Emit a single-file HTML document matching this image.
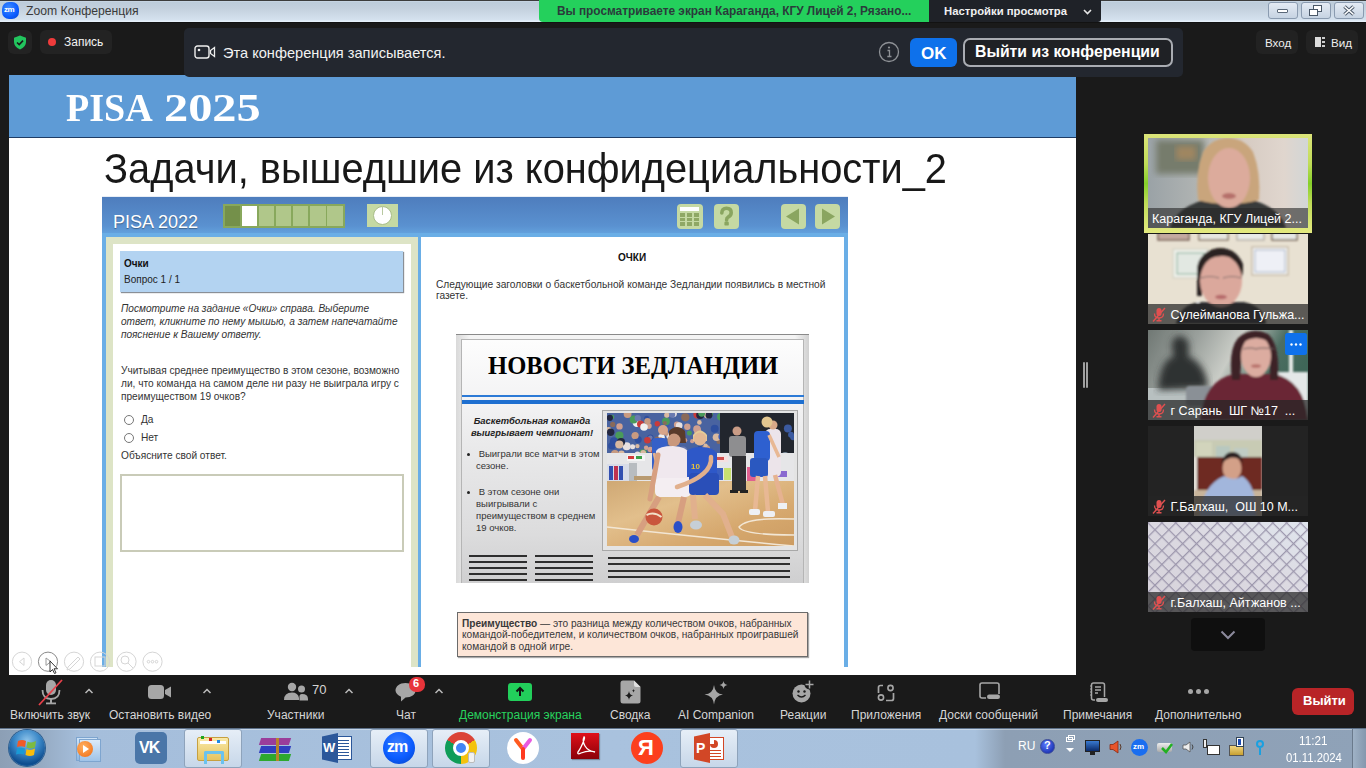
<!DOCTYPE html>
<html><head><meta charset="utf-8">
<style>
*{margin:0;padding:0;box-sizing:border-box}
html,body{width:1366px;height:768px;overflow:hidden;background:#1a1a1a;font-family:"Liberation Sans",sans-serif}
.a{position:absolute}
.t{position:absolute;white-space:nowrap}
.lbl{font-size:12px;color:#d6d6d6}
</style></head><body>
<!-- title bar -->
<div class="a" style="left:0;top:0;width:1366px;height:23px;background:linear-gradient(#3c3c3c 0,#3c3c3c 1px,#cad8e6 1px,#bdccda 2.5px,#c3d0dd 8px,#d5e2ef 20px,#e6f0fa 21px,#e6f0fa 21.5px,#121212 22px)"></div>
<div class="a" style="left:2px;top:2px;width:17px;height:17px;border-radius:7px;background:radial-gradient(circle at 40% 35%,#3f8cff,#0b5cff 60%,#0a45c8)"></div>
<div class="t" style="left:4px;top:5px;font-size:8px;color:#fff;font-weight:bold;letter-spacing:-0.5px">zm</div>
<div class="t" style="left:26px;top:4px;font-size:12.2px;color:#3a3a3a">Zoom Конференция</div>
<!-- green banner -->
<div class="a" style="left:539px;top:0;width:390px;height:22px;background:#24d05c;border-radius:0 0 0 4px"></div>
<div class="t" style="left:557px;top:3.5px;font-size:11.85px;font-weight:bold;color:#2a3b3b">Вы просматриваете экран Караганда, КГУ Лицей 2, Рязано...</div>
<div class="a" style="left:929px;top:0;width:172px;height:22px;background:#1f2228;border-radius:0 0 3px 0"></div>
<div class="t" style="left:944px;top:4.7px;font-size:11.3px;font-weight:bold;color:#f0f0f0">Настройки просмотра</div>
<!-- record indicators -->
<div class="a" style="left:8px;top:30px;width:24px;height:24px;border-radius:6px;background:#232323"></div>
<div class="a" style="left:40px;top:30px;width:72px;height:24px;border-radius:6px;background:#232323"></div>
<div class="a" style="left:48px;top:38px;width:8px;height:8px;border-radius:50%;background:#ef3b3b"></div>
<div class="t" style="left:64px;top:35px;font-size:12px;color:#f2f2f2">Запись</div>
<!-- slide -->
<div class="a" id="slide" style="left:9px;top:75px;width:1067px;height:600px;background:#fff;overflow:hidden">
  <div class="a" style="left:0;top:0;width:1067px;height:63px;background:#5e9bd6;border-bottom:1px solid #1f3d66"></div>
  <div class="t" style="left:56.5px;top:9.5px;font-family:'Liberation Serif',serif;font-weight:bold;font-size:39px;color:#fff;transform:scaleX(0.976);transform-origin:0 0">PISA</div>
  <div class="t" style="left:154.5px;top:9.5px;font-family:'Liberation Serif',serif;font-weight:bold;font-size:39px;color:#fff;transform:scaleX(1.24);transform-origin:0 0">2025</div>
  <div class="t" style="left:95px;top:70px;font-size:40px;color:#181818;transform:scale(0.995,1.05);transform-origin:0 0">Задачи, вышедшие из конфидециальности_2</div>
</div>
</div>

<!-- PISA window (absolute page coords) -->
<div class="a" style="left:102px;top:197px;width:746px;height:470px;background:#6aaee6"></div>
<div class="a" style="left:102px;top:197px;width:746px;height:36px;background:linear-gradient(#4e7dbd,#5a91d0 80%,#62a0dc)"></div>
<div class="a" style="left:102px;top:196px;width:746px;height:1px;background:#e8eef6"></div>
<div class="t" style="left:113px;top:212px;font-size:18px;color:#fff;text-shadow:0 1px 1px rgba(0,0,0,.35)">PISA 2022</div>
<!-- progress -->
<div class="a" style="left:223px;top:204px;width:122px;height:24px;background:#88a85c"></div>
<div class="a" style="left:225px;top:206px;width:15px;height:20px;background:#74904a"></div>
<div class="a" style="left:242px;top:206px;width:15px;height:20px;background:#fff"></div>
<div class="a" style="left:259px;top:206px;width:15px;height:20px;background:#b0c78a"></div>
<div class="a" style="left:276px;top:206px;width:15px;height:20px;background:#b0c78a"></div>
<div class="a" style="left:293px;top:206px;width:15px;height:20px;background:#b0c78a"></div>
<div class="a" style="left:310px;top:206px;width:16px;height:20px;background:#b0c78a"></div>
<div class="a" style="left:327px;top:206px;width:16px;height:20px;background:#b0c78a"></div>
<div class="a" style="left:367px;top:204px;width:31px;height:23px;background:#c5d9a3"></div>
<div class="a" style="left:373px;top:206px;width:19px;height:19px;border-radius:50%;background:#fff;border:1px solid #a9bd8a"></div><div class="a" style="left:382px;top:207px;width:1px;height:8px;background:#b8c8a0"></div>
<!-- right icons -->
<div class="a" style="left:677px;top:204px;width:26px;height:25px;border-radius:4px;background:#c5d9a3"></div>
<div class="a" style="left:680px;top:207px;width:19px;height:4px;background:#fff"></div>
<div class="a" style="left:680px;top:213px;width:19px;height:13px;background:repeating-linear-gradient(90deg,#8fa865 0,#8fa865 5px,#c5d9a3 5px,#c5d9a3 7px),#8fa865"></div>
<div class="a" style="left:680px;top:217px;width:19px;height:1px;background:#c5d9a3"></div>
<div class="a" style="left:680px;top:221px;width:19px;height:1px;background:#c5d9a3"></div>
<div class="a" style="left:714px;top:204px;width:25px;height:25px;border-radius:4px;background:#c5d9a3"></div>
<svg class="a" style="left:714px;top:204px" width="25" height="25"><path d="M7.8 9 Q7.8 4.3 12.5 4.3 Q17.2 4.3 17.2 8.8 Q17.2 11.6 14.2 13 Q12.6 13.8 12.6 16" stroke="#8aa560" stroke-width="3.6" fill="none" stroke-linecap="round"/><rect x="10.4" y="17.6" width="4.4" height="4" rx="1.2" fill="#8aa560"/></svg>
<div class="a" style="left:781px;top:204px;width:25px;height:25px;border-radius:4px;background:#c5d9a3"></div>
<svg class="a" style="left:781px;top:204px" width="25" height="25"><path d="M5 12.5 L18 4.5 L18 20.5 Z" fill="#8aa560"/></svg>
<div class="a" style="left:815px;top:204px;width:25px;height:25px;border-radius:4px;background:#c5d9a3"></div>
<svg class="a" style="left:815px;top:204px" width="25" height="25"><path d="M20 12.5 L7 4.5 L7 20.5 Z" fill="#8aa560"/></svg>
<!-- left panel -->
<div class="a" style="left:106px;top:237px;width:312px;height:430px;background:#dde4c6"></div>
<div class="a" style="left:113px;top:244px;width:298px;height:423px;background:#fff"></div>
<div class="a" style="left:120px;top:251px;width:283px;height:41px;background:#b3d3f1;box-shadow:1px 1px 1px #8a8f96"></div>
<div class="t" style="left:124px;top:258px;font-size:10px;font-weight:bold;color:#111">Очки</div>
<div class="t" style="left:124px;top:274px;font-size:10px;color:#222">Вопрос 1 / 1</div>
<div class="a" style="left:121px;top:302px;font-size:10.1px;line-height:13px;font-style:italic;color:#333;white-space:nowrap">Посмотрите на задание «Очки» справа. Выберите<br>ответ, кликните по нему мышью, а затем напечатайте<br>пояснение к Вашему ответу.</div>
<div class="a" style="left:121px;top:364px;font-size:10.15px;line-height:13px;color:#333;white-space:nowrap">Учитывая среднее преимущество в этом сезоне, возможно<br>ли, что команда на самом деле ни разу не выиграла игру с<br>преимуществом 19 очков?</div>
<div class="a" style="left:124px;top:415px;width:10px;height:10px;border-radius:50%;border:1px solid #777;background:#fff"></div>
<div class="t" style="left:141px;top:414px;font-size:10.15px;color:#333">Да</div>
<div class="a" style="left:124px;top:433px;width:10px;height:10px;border-radius:50%;border:1px solid #777;background:#fff"></div>
<div class="t" style="left:141px;top:432px;font-size:10.15px;color:#333">Нет</div>
<div class="t" style="left:121px;top:450px;font-size:10.15px;color:#333">Объясните свой ответ.</div>
<div class="a" style="left:120px;top:474px;width:284px;height:78px;border:2px solid #c9cbb8;background:#fff"></div>
<!-- right content -->
<div class="a" style="left:421px;top:237px;width:423px;height:430px;background:#fff"></div>
<div class="t" style="left:618px;top:252px;font-size:10px;font-weight:bold;color:#111">ОЧКИ</div>
<div class="a" style="left:436px;top:279px;font-size:10.2px;line-height:11px;color:#333;white-space:nowrap">Следующие заголовки о баскетбольной команде Зедландии появились в местной<br>газете.</div>


<!-- newspaper -->
<div class="a" style="left:456px;top:334px;width:353px;height:249px;background:linear-gradient(90deg,#d9d9d9,#f4f4f4 4%,#f4f4f4 96%,#d0d0d0);border-top:1px solid #8a8a8a"></div>
<div class="a" style="left:461px;top:339px;width:343px;height:244px;border:1px solid #b5b5b5;border-bottom:none;background:linear-gradient(#fdfdfd 0,#f3f3f4 25%,#e9e9ea 45%,#dcdcdd 80%,#cfcfd0 100%)"></div>
<div class="t" style="left:488px;top:351.5px;font-family:'Liberation Serif',serif;font-weight:bold;font-size:24.6px;color:#000">НОВОСТИ ЗЕДЛАНДИИ</div>
<div class="a" style="left:462px;top:395px;width:342px;height:2px;background:#2c7ad6"></div>
<div class="a" style="left:462px;top:400px;width:342px;height:4px;background:#1e6fd0"></div>
<div class="a" style="left:462px;top:414.5px;width:140px;text-align:center;font-size:9.4px;line-height:12.5px;font-weight:bold;font-style:italic;color:#222">Баскетбольная команда<br>выигрывает чемпионат!</div>
<div class="a" style="left:466px;top:450px;width:4px;height:3px;"></div>
<div class="a" style="left:466.5px;top:452.5px;width:3px;height:3px;border-radius:50%;background:#222"></div>
<div class="a" style="left:476px;top:448px;font-size:9.5px;line-height:12px;color:#333;white-space:nowrap">&nbsp;Выиграли все матчи в этом<br>сезоне.</div>
<div class="a" style="left:466.5px;top:490.5px;width:3px;height:3px;border-radius:50%;background:#222"></div>
<div class="a" style="left:476px;top:486px;font-size:9.5px;line-height:12px;color:#333;white-space:nowrap">&nbsp;В этом сезоне они<br>выигрывали с<br>преимуществом в среднем<br>19 очков.</div>
<div class="a" style="left:602px;top:410px;width:196px;height:141px;border:1px solid #a8a8a8;background:#e4e4e4"></div>
<svg class="a" style="left:607px;top:413px" width="187" height="133" viewBox="0 0 187 133">
 <defs><filter id="bl" x="-5%" y="-5%" width="110%" height="110%"><feGaussianBlur stdDeviation=".7"/></filter>
 <linearGradient id="fl" x1="0" y1="0" x2="1" y2="1"><stop offset="0" stop-color="#cfa874"/><stop offset=".35" stop-color="#e2bf8c"/><stop offset=".7" stop-color="#d6a86e"/><stop offset="1" stop-color="#cc9c62"/></linearGradient></defs>
 <g filter="url(#bl)">
 <rect width="187" height="133" fill="#5a6e9a"/>
 <rect x="0" y="0" width="116" height="44" fill="#4a64a0"/>
 <circle cx="27.4" cy="22.9" r="2.8" fill="#d0a090"/><circle cx="54.5" cy="24.4" r="3.3" fill="#f0f0f0"/><circle cx="29.8" cy="9.8" r="4.2" fill="#f0f0f0"/><circle cx="62.2" cy="23.1" r="2.9" fill="#e8e0e0"/><circle cx="26.7" cy="6.4" r="4.0" fill="#4a9a5a"/><circle cx="85.2" cy="28.2" r="2.1" fill="#d0a090"/><circle cx="4.9" cy="32.8" r="3.8" fill="#2f4f9f"/><circle cx="54.4" cy="30.2" r="3.9" fill="#202840"/><circle cx="90.6" cy="17.9" r="3.6" fill="#d0a090"/><circle cx="51.1" cy="39.3" r="3.9" fill="#c89a80"/><circle cx="4.1" cy="20.8" r="2.6" fill="#6a7ab0"/><circle cx="50.2" cy="26.3" r="2.7" fill="#8a6a5a"/><circle cx="95.8" cy="24.1" r="3.2" fill="#4a9a5a"/><circle cx="67.2" cy="38.0" r="3.5" fill="#d9b9a0"/><circle cx="98.5" cy="41.6" r="3.5" fill="#e8e0e0"/><circle cx="80.3" cy="13.7" r="3.2" fill="#d0a090"/><circle cx="65.4" cy="30.0" r="2.5" fill="#d0a090"/><circle cx="30.7" cy="5.2" r="3.1" fill="#6a7ab0"/><circle cx="113.8" cy="3.7" r="3.8" fill="#4a9a5a"/><circle cx="103.2" cy="0.8" r="2.9" fill="#4a9a5a"/><circle cx="100.4" cy="1.9" r="3.4" fill="#d9b9a0"/><circle cx="43.4" cy="24.6" r="3.2" fill="#2f4f9f"/><circle cx="58.1" cy="41.9" r="2.7" fill="#c89a80"/><circle cx="12.4" cy="22.5" r="4.1" fill="#4a9a5a"/><circle cx="33.5" cy="11.1" r="3.5" fill="#c83a3a"/><circle cx="36.1" cy="40.3" r="4.0" fill="#4a9a5a"/><circle cx="43.3" cy="36.5" r="2.8" fill="#d0a090"/><circle cx="78.3" cy="4.3" r="4.1" fill="#8a6a5a"/><circle cx="31.2" cy="26.6" r="3.6" fill="#2f4f9f"/><circle cx="50.3" cy="10.8" r="2.7" fill="#c83a3a"/><circle cx="1.3" cy="17.4" r="3.3" fill="#d9b9a0"/><circle cx="43.3" cy="24.7" r="2.3" fill="#6a7ab0"/><circle cx="72.1" cy="19.6" r="3.5" fill="#c83a3a"/><circle cx="70.0" cy="11.7" r="3.1" fill="#d0a090"/><circle cx="7.0" cy="28.4" r="4.1" fill="#2f4f9f"/><circle cx="72.2" cy="12.5" r="3.3" fill="#e8e0e0"/><circle cx="41.9" cy="13.1" r="2.8" fill="#d0a090"/><circle cx="30.4" cy="33.1" r="2.2" fill="#d9b9a0"/><circle cx="111.7" cy="28.7" r="2.3" fill="#8a6a5a"/><circle cx="25.6" cy="33.8" r="2.5" fill="#e8e0e0"/><circle cx="78.0" cy="27.3" r="2.2" fill="#d0a090"/><circle cx="37.0" cy="14.0" r="3.8" fill="#f0f0f0"/><circle cx="93.1" cy="40.3" r="2.2" fill="#202840"/><circle cx="74.8" cy="37.2" r="3.0" fill="#3a5ab0"/><circle cx="90.5" cy="1.4" r="4.1" fill="#c83a3a"/><circle cx="92.8" cy="35.2" r="2.4" fill="#2f4f9f"/><circle cx="39.1" cy="34.8" r="2.2" fill="#d0a090"/><circle cx="39.7" cy="5.4" r="2.6" fill="#2f4f9f"/><circle cx="53.4" cy="26.6" r="2.6" fill="#d0a090"/><circle cx="47.1" cy="38.7" r="2.3" fill="#d9b9a0"/><circle cx="54.9" cy="35.0" r="3.4" fill="#8a6a5a"/><circle cx="50.0" cy="39.9" r="4.0" fill="#3a5ab0"/><circle cx="3.7" cy="19.2" r="3.7" fill="#202840"/><circle cx="59.7" cy="12.1" r="2.8" fill="#3a5ab0"/><circle cx="99.1" cy="36.0" r="4.1" fill="#c89a80"/><circle cx="93.2" cy="1.9" r="4.0" fill="#202840"/><circle cx="58.9" cy="8.3" r="3.9" fill="#4a9a5a"/><circle cx="66.3" cy="0.6" r="3.6" fill="#e8e0e0"/><circle cx="57.9" cy="10.0" r="2.0" fill="#8a6a5a"/><circle cx="47.6" cy="39.4" r="3.3" fill="#c83a3a"/><circle cx="14.4" cy="40.8" r="3.2" fill="#d9b9a0"/><circle cx="40.5" cy="8.3" r="3.2" fill="#c89a80"/><circle cx="19.7" cy="33.3" r="4.0" fill="#e8e0e0"/><circle cx="94.7" cy="0.3" r="3.4" fill="#4a9a5a"/><circle cx="5.7" cy="11.4" r="2.6" fill="#8a6a5a"/><circle cx="59.8" cy="2.1" r="2.7" fill="#d9b9a0"/><circle cx="98.6" cy="32.6" r="2.1" fill="#d9b9a0"/><circle cx="7.9" cy="40.9" r="3.9" fill="#c89a80"/><circle cx="59.3" cy="20.6" r="2.3" fill="#c89a80"/><circle cx="40.4" cy="27.2" r="3.3" fill="#c83a3a"/><circle cx="30.5" cy="41.5" r="2.9" fill="#e8e0e0"/><circle cx="63.9" cy="30.1" r="2.8" fill="#c89a80"/><circle cx="65.2" cy="1.8" r="3.0" fill="#6a7ab0"/><circle cx="90.0" cy="16.0" r="3.8" fill="#d0a090"/><circle cx="102.0" cy="2.2" r="3.4" fill="#202840"/><circle cx="36.2" cy="39.9" r="2.9" fill="#d9b9a0"/><circle cx="28.2" cy="22.5" r="3.5" fill="#c89a80"/><circle cx="92.4" cy="9.4" r="2.3" fill="#d9b9a0"/><circle cx="107.7" cy="15.7" r="4.0" fill="#2f4f9f"/><circle cx="14.0" cy="29.0" r="4.1" fill="#202840"/><circle cx="76.2" cy="37.3" r="3.7" fill="#6a7ab0"/><circle cx="12.5" cy="13.4" r="3.2" fill="#d0a090"/><circle cx="82.4" cy="19.9" r="2.5" fill="#4a9a5a"/><circle cx="5.1" cy="3.9" r="2.2" fill="#4a9a5a"/><circle cx="20.6" cy="1.0" r="3.9" fill="#c89a80"/><circle cx="2.9" cy="4.8" r="3.1" fill="#202840"/><circle cx="109.5" cy="24.3" r="3.8" fill="#d9b9a0"/><circle cx="114.6" cy="23.7" r="3.2" fill="#3a5ab0"/><circle cx="12.3" cy="31.5" r="4.1" fill="#d9b9a0"/><circle cx="63.3" cy="36.5" r="2.4" fill="#c89a80"/>
 <rect x="113" y="0" width="74" height="46" fill="#24272e"/>
 <circle cx="166.5" cy="16.8" r="2.9" fill="#3a5aa0"/><circle cx="166.8" cy="32.8" r="3.9" fill="#3a5aa0"/><circle cx="186.1" cy="24.3" r="2.9" fill="#3a5aa0"/><circle cx="182.8" cy="46.7" r="3.1" fill="#3a5aa0"/><circle cx="164.2" cy="25.2" r="3.8" fill="#c8a090"/><circle cx="162.6" cy="38.4" r="3.9" fill="#3a5aa0"/><circle cx="175.8" cy="42.6" r="2.7" fill="#c8a090"/><circle cx="164.0" cy="29.6" r="3.9" fill="#7a8a9a"/><circle cx="178.1" cy="42.5" r="3.4" fill="#7a8a9a"/><circle cx="184.0" cy="21.7" r="2.9" fill="#3a5aa0"/><circle cx="165.4" cy="31.7" r="2.9" fill="#3a5aa0"/><circle cx="180.9" cy="15.5" r="4.0" fill="#3a5aa0"/>
 <rect x="0" y="40" width="187" height="29" fill="#e6e6e8"/>
 <rect x="0" y="51" width="22" height="18" fill="#d8dce8"/><rect x="2" y="53" width="4" height="14" fill="#3050b0"/><rect x="7" y="53" width="4" height="14" fill="#c03050"/><rect x="12" y="53" width="4" height="14" fill="#3050b0"/>
 <rect x="22" y="50" width="8" height="19" fill="#b8bcc0"/>
 <rect x="20" y="42" width="18" height="6" fill="#f4f4f4"/><rect x="21" y="43" width="6" height="3" fill="#d23a3a"/><rect x="29" y="43" width="6" height="3" fill="#3aa04a"/>
 <rect x="107" y="43" width="14" height="6" fill="#f4e0e0"/><rect x="109" y="44" width="8" height="3" fill="#d05050"/>
 <rect x="27" y="63" width="20" height="4" fill="#b89a70"/>
 <rect x="108" y="55" width="8" height="12" fill="#3a60c0"/><rect x="117" y="55" width="7" height="12" fill="#c8e070"/><rect x="140" y="54" width="11" height="14" fill="#e06090"/><rect x="170" y="58" width="10" height="6" fill="#8a6ad0"/>
 <rect x="0" y="68" width="187" height="65" fill="url(#fl)"/>
 <path d="M0 114 Q90 124 187 133" stroke="#f2e6d4" stroke-width="1.6" fill="none"/>
 <path d="M187 106 Q140 104 132 114 Q136 122 187 122" stroke="#f2e6d4" stroke-width="1.5" fill="none"/>
 <!-- referee -->
 <rect x="122" y="23" width="17" height="21" rx="3" fill="#8e8e90"/><circle cx="130" cy="18" r="4.5" fill="#c99c86"/>
 <rect x="125" y="43" width="14" height="35" fill="#2e2e30"/><rect x="123" y="77" width="8" height="3" fill="#222"/><rect x="133" y="77" width="8" height="3" fill="#222"/>
 <!-- right white player -->
 <rect x="158" y="16" width="16" height="48" rx="5" fill="#ece4ea"/><circle cx="166" cy="12" r="4.5" fill="#d8a888"/>
 <path d="M168 62 L176 92" stroke="#e6b290" stroke-width="4.5"/><rect x="171" y="90" width="9" height="6" fill="#eef0f4"/>
 <!-- right blue player -->
 <circle cx="160" cy="9" r="5.5" fill="#e2c690"/><rect x="147" y="18" width="16" height="30" rx="4" fill="#2f60d0"/><rect x="143" y="45" width="18" height="19" rx="3" fill="#2c58c0"/>
 <path d="M151 63 L148 98 M158 63 L161 99" stroke="#e8b894" stroke-width="4.5"/>
 <rect x="142" y="96" width="11" height="6" rx="2" fill="#eef0f4"/><rect x="156" y="98" width="12" height="6" rx="2" fill="#eef0f4"/>
 <path d="M162 22 L172 44" stroke="#e8b894" stroke-width="3.5"/>
 <!-- left-back blue player -->
 <circle cx="56" cy="17" r="5" fill="#d8a58a"/><rect x="45" y="25" width="15" height="33" rx="4" fill="#3560c8"/><path d="M47 40 L52 60" stroke="#e0b090" stroke-width="3"/>
 <!-- white player -->
 <path d="M62 18 Q70 10 78 18 L79 30 L62 30 Z" fill="#5a3a2a"/>
 <circle cx="67" cy="27" r="6.5" fill="#c9987c"/>
 <path d="M49 38 Q52 33 66 33 Q80 34 82 40 L82 70 L50 70 Z" fill="#f0e8ee"/>
 <rect x="48" y="65" width="36" height="19" rx="5" fill="#f4eef2"/>
 <path d="M51 42 L43 86" stroke="#d79f80" stroke-width="5" fill="none" stroke-linecap="round"/>
 <path d="M52 84 L30 122" stroke="#d79f80" stroke-width="6" fill="none"/>
 <path d="M77 84 L71 110" stroke="#d79f80" stroke-width="6" fill="none"/>
 <circle cx="47" cy="104" r="8.5" fill="#c9563c"/><path d="M39.5 102 Q47 98 54.5 104" stroke="#f2e0c8" stroke-width="2" fill="none"/>
 <ellipse cx="27" cy="126" rx="5" ry="4" fill="#2b50c8"/><ellipse cx="71" cy="114" rx="4.5" ry="6" fill="#2b50c8"/>
 <!-- blue player front -->
 <path d="M86 22 Q93 13 100 22 L100 28 L86 28 Z" fill="#e6cc96"/>
 <circle cx="93" cy="26" r="6.5" fill="#e3b894"/>
 <path d="M80 38 Q84 34 94 34 Q106 34 110 40 L110 64 L80 64 Z" fill="#2f58c8"/>
 <text x="84" y="56" font-size="8" font-weight="bold" fill="#e6c03a" font-family="Liberation Sans">10</text>
 <rect x="82" y="60" width="30" height="22" rx="4" fill="#2a4fb8"/>
 <path d="M104 44 Q106 62 70 74" stroke="#e1b08d" stroke-width="4.5" fill="none" stroke-linecap="round"/>
 <path d="M98 82 L116 101 L125 124" stroke="#e1b08d" stroke-width="6" fill="none"/>
 <path d="M86 82 L88 106" stroke="#e1b08d" stroke-width="6" fill="none"/>
 <ellipse cx="127" cy="127" rx="5.5" ry="4.5" fill="#c6cfd6"/><ellipse cx="89" cy="112" rx="6" ry="4.5" fill="#c6cfd6"/>
 </g>
</svg>
<div class="a" style="left:469px;top:554.5px;width:58px;height:27px;background:repeating-linear-gradient(#2e2e2e 0,#2e2e2e 2px,transparent 2px,transparent 6px)"></div>
<div class="a" style="left:535px;top:554.5px;width:58px;height:27px;background:repeating-linear-gradient(#2e2e2e 0,#2e2e2e 2px,transparent 2px,transparent 6px)"></div>
<div class="a" style="left:608px;top:557px;width:182px;height:21px;background:repeating-linear-gradient(#2e2e2e 0,#2e2e2e 2px,transparent 2px,transparent 6.3px)"></div>
<!-- advantage box -->
<div class="a" style="left:457px;top:612px;width:351px;height:45px;background:#fde6d8;border:1px solid #6b6b6b;box-shadow:1px 1px 1px #aaa"></div>
<div class="a" style="left:462px;top:617.5px;font-size:10.15px;line-height:11.7px;color:#383838;white-space:nowrap"><b>Преимущество</b> — это разница между количеством очков, набранных<br>командой-победителем, и количеством очков, набранных проигравшей<br>командой в одной игре.</div>

<!-- banner -->
<div class="a" style="left:184px;top:28px;width:999px;height:49px;background:#23272f;border-radius:5px"></div>
<div class="t" style="left:223px;top:44.5px;font-size:14.6px;color:#f2f2f2">Эта конференция записывается.</div>
<div class="a" style="left:910px;top:38px;width:47px;height:29px;border-radius:6px;background:#0e71eb"></div>
<div class="t" style="left:921px;top:44px;font-size:17px;font-weight:bold;color:#fff">OK</div>
<div class="a" style="left:963px;top:38px;width:210px;height:29px;border-radius:7px;border:2px solid #a9acb2;background:#1f2125"></div>
<div class="t" style="left:975px;top:42.5px;font-size:15.8px;font-weight:bold;color:#fff">Выйти из конференции</div>

<!-- top right buttons -->
<div class="a" style="left:1256px;top:30px;width:42px;height:24px;border-radius:6px;background:#222"></div>
<div class="t" style="left:1265px;top:35.5px;font-size:11.6px;color:#eee">Вход</div>
<div class="a" style="left:1306px;top:30px;width:52px;height:24px;border-radius:6px;background:#222"></div>
<div class="a" style="left:1315px;top:37px;width:6px;height:10px;background:#ddd"></div>
<div class="a" style="left:1322px;top:37px;width:3px;height:2px;background:#ccc"></div>
<div class="a" style="left:1322px;top:41px;width:3px;height:2px;background:#ccc"></div>
<div class="a" style="left:1322px;top:45px;width:3px;height:2px;background:#ccc"></div>
<div class="t" style="left:1331px;top:35.5px;font-size:11.6px;color:#eee">Вид</div>
<!-- divider -->
<div class="a" style="left:1083px;top:362px;width:2px;height:26px;background:#a0a0a0;border-radius:1px"></div>
<div class="a" style="left:1086px;top:362px;width:2px;height:26px;background:#a0a0a0;border-radius:1px"></div>
<!-- participant tiles -->
<div class="a" style="left:1144px;top:134px;width:168px;height:99px;background:linear-gradient(#dce47a,#c0dc58 30%,#86d02a 50%,#c0dc58 70%,#e4ea80)"></div>
<div class="a" style="left:1148px;top:138px;width:160px;height:90px;overflow:hidden">
<svg width="160" height="90" style="position:absolute;left:0;top:0"><defs>
<linearGradient id="t1bg" x1="0" x2="1"><stop offset="0" stop-color="#9aa2a6"/><stop offset=".35" stop-color="#b3b6b4"/><stop offset=".6" stop-color="#d6cbc2"/><stop offset=".85" stop-color="#e0d6ce"/><stop offset="1" stop-color="#d2d6d6"/></linearGradient>
<filter id="b3"><feGaussianBlur stdDeviation="3"/></filter><filter id="b1"><feGaussianBlur stdDeviation="1"/></filter></defs>
<rect width="160" height="90" fill="url(#t1bg)"/>
<rect x="8" y="2" width="48" height="34" fill="#767b6c" filter="url(#b3)"/>
<rect x="28" y="8" width="20" height="14" fill="#a08660" filter="url(#b3)"/>
<g filter="url(#b1)">
<path d="M22 90 Q30 62 80 58 Q130 62 138 90 Z" fill="#393b3a"/>
<path d="M50 62 Q47 34 55 14 Q64 0 80 0 Q96 0 105 14 Q113 34 111 62 Q98 66 80 66 Q62 66 50 62 Z" fill="#c9a57c"/>
<ellipse cx="81" cy="40" rx="21" ry="30" fill="#dcab9c"/>
<ellipse cx="81" cy="58" rx="7" ry="3" fill="#b56f6a"/>
</g>
</svg>
<div class="a" style="left:0;top:70px;width:160px;height:20px;background:rgba(38,38,38,.6)"></div><div class="t" style="left:4px;top:73.5px;font-size:12.5px;color:#fff">Караганда, КГУ Лицей 2...</div>
</div>
<div class="a" style="left:1148px;top:234px;width:160px;height:90px;overflow:hidden">
<svg width="160" height="90" style="position:absolute;left:0;top:0"><defs><filter id="b1b"><feGaussianBlur stdDeviation=".9"/></filter></defs>
<rect width="160" height="90" fill="#e8e1d2"/>
<g filter="url(#b1b)">
<rect x="10" y="-2" width="31" height="8" fill="#c4a9a0" stroke="#7a6458" stroke-width="1.5"/>
<rect x="51" y="-2" width="29" height="8" fill="#e6e6e0" stroke="#8a7a6a" stroke-width="1.5"/>
<rect x="89" y="-2" width="27" height="8" fill="#e8ebe8" stroke="#b8b2a8" stroke-width="1.5"/>
<rect x="124" y="-2" width="25" height="8" fill="#e6e8e6" stroke="#7a6a5a" stroke-width="1.5"/>
<rect x="25" y="15" width="35" height="29" fill="#eef0ea" stroke="#d8d6c8" stroke-width="1.5"/>
<rect x="29" y="19" width="27" height="21" fill="#e2e8e2" stroke="#8ab09a" stroke-width="1"/>
<rect x="104" y="13" width="36" height="28" fill="#f2f2f0" stroke="#c8bcaa" stroke-width="1.5"/>
<rect x="107" y="16" width="30" height="22" fill="#eef0f6" stroke="#9aa8c0" stroke-width=".8"/>
<path d="M28 90 Q32 70 52 68 L96 68 Q116 72 118 90 Z" fill="#2e2e30"/>
<ellipse cx="72" cy="36" rx="23" ry="22" fill="#2a2220"/>
<path d="M49 40 L49 62 L54 62 L54 40 Z" fill="#2a2220"/>
<ellipse cx="73" cy="47" rx="21" ry="26" fill="#dba89c"/>
<path d="M52 34 Q60 22 74 22 Q90 22 95 36 L95 30 Q88 14 72 14 Q54 16 50 34 Z" fill="#2a2220"/>
<path d="M53 44 Q62 41 71 44 M75 44 Q84 41 93 44" stroke="#7a6a68" stroke-width="1.2" fill="none"/>
<ellipse cx="73" cy="63" rx="6" ry="2.2" fill="#b66a6a"/>
<circle cx="50" cy="68" r="1.6" fill="#f0f0f0"/>
</g>
</svg>
<div class="a" style="left:0;top:70px;width:160px;height:20px;background:rgba(38,38,38,.72)"></div><svg class="a" style="left:4px;top:73px" width="14" height="15" viewBox="0 0 14 15"><rect x="4.5" y="1" width="5" height="8" rx="2.5" fill="#e05050"/><path d="M2.5 6.5 Q2.5 11 7 11 Q11.5 11 11.5 6.5" stroke="#e05050" stroke-width="1.3" fill="none"/><path d="M7 11 L7 13.5 M4.5 13.8 L9.5 13.8" stroke="#e05050" stroke-width="1.4"/><path d="M1 14.5 L13 1" stroke="#e05050" stroke-width="1.4"/></svg><div class="t" style="left:22.5px;top:73.5px;font-size:12.5px;color:#fff">Сулейманова Гульжа...</div>
</div>
<div class="a" style="left:1148px;top:330px;width:160px;height:90px;overflow:hidden">
<svg width="160" height="90" style="position:absolute;left:0;top:0"><defs>
<linearGradient id="t3bg" x1="0" x2="1" y1="0" y2=".3"><stop offset="0" stop-color="#707874"/><stop offset=".3" stop-color="#9aa09c"/><stop offset=".55" stop-color="#c9ccc6"/><stop offset=".8" stop-color="#4d6e62"/><stop offset="1" stop-color="#3f6658"/></linearGradient>
<filter id="b3c"><feGaussianBlur stdDeviation="3.5"/></filter><filter id="b1c"><feGaussianBlur stdDeviation="1"/></filter></defs>
<rect width="160" height="90" fill="url(#t3bg)"/>
<rect x="0" y="58" width="70" height="32" fill="#b8c0c0"/>
<path d="M10 60 Q12 30 26 26 Q20 10 30 6 Q44 6 40 26 Q58 34 60 58 Z" fill="#2e3230" filter="url(#b3c)"/>
<g filter="url(#b1c)">
<rect x="141" y="0" width="4" height="45" fill="#e8ecea"/>
<rect x="126" y="42" width="34" height="48" fill="#e4e8e8"/>
<rect x="38" y="56" width="34" height="20" rx="4" fill="#8a9096"/>
<path d="M52 90 Q56 50 86 44 L126 44 Q156 50 160 90 Z" fill="#6a2834"/>
<path d="M84 50 Q80 20 90 8 Q104 -4 120 4 Q132 14 130 50 L122 50 L122 20 L94 20 L92 50 Z" fill="#3c2226"/>
<ellipse cx="108" cy="26" rx="15" ry="21" fill="#dcaca0"/>
<path d="M93 14 Q108 2 124 14 L124 10 Q108 -2 93 10 Z" fill="#3c2226"/>
<path d="M95 19 Q103 17 108 19 Q113 17 126 19" stroke="#6a5a58" stroke-width="1.1" fill="none"/>
<ellipse cx="108" cy="36" rx="5" ry="1.8" fill="#b8706a"/>
</g>
<rect x="137" y="3" width="22" height="22" rx="2.5" fill="#0e71eb"/>
<circle cx="143.5" cy="14.5" r="1.2" fill="#fff"/><circle cx="148" cy="14.5" r="1.2" fill="#fff"/><circle cx="152.5" cy="14.5" r="1.2" fill="#fff"/>
</svg>
<div class="a" style="left:0;top:70px;width:160px;height:20px;background:rgba(38,38,38,.72)"></div><svg class="a" style="left:4px;top:73px" width="14" height="15" viewBox="0 0 14 15"><rect x="4.5" y="1" width="5" height="8" rx="2.5" fill="#e05050"/><path d="M2.5 6.5 Q2.5 11 7 11 Q11.5 11 11.5 6.5" stroke="#e05050" stroke-width="1.3" fill="none"/><path d="M7 11 L7 13.5 M4.5 13.8 L9.5 13.8" stroke="#e05050" stroke-width="1.4"/><path d="M1 14.5 L13 1" stroke="#e05050" stroke-width="1.4"/></svg><div class="t" style="left:22.5px;top:73.5px;font-size:12.5px;color:#fff">г Сарань &nbsp;ШГ №17 &nbsp;...</div>
</div>
<div class="a" style="left:1148px;top:426px;width:160px;height:90px;overflow:hidden;background:#232323">
<svg width="68" height="90" style="position:absolute;left:46px;top:0"><defs><filter id="b1d"><feGaussianBlur stdDeviation="1"/></filter></defs>
<rect width="68" height="90" fill="#d0cfca"/>
<g filter="url(#b1d)">
<rect x="0" y="14" width="68" height="18" fill="#c8cbb4"/>
<rect x="2" y="16" width="16" height="14" fill="#d2d4bc"/><rect x="22" y="20" width="14" height="12" fill="#b8c8c0"/><rect x="40" y="22" width="14" height="12" fill="#c0ccc4"/>
<rect x="0" y="31" width="68" height="34" fill="#6e2c24"/>
<rect x="0" y="31" width="3" height="35" fill="#e8e4dc"/>
<rect x="0" y="64" width="68" height="26" fill="#c8b49a"/>
<ellipse cx="38" cy="42" rx="9.5" ry="12" fill="#d3a088"/>
<path d="M27 38 Q30 26 38 26 Q48 26 49 38 L47 34 Q38 28 29 36 Z" fill="#2a2220"/>
<path d="M6 90 Q8 60 30 50 Q40 56 48 50 Q62 58 62 90 Z" fill="#a2b6dc"/>
</g>
</svg>
<div class="a" style="left:0;top:70px;width:160px;height:20px;background:rgba(38,38,38,.72)"></div><svg class="a" style="left:4px;top:73px" width="14" height="15" viewBox="0 0 14 15"><rect x="4.5" y="1" width="5" height="8" rx="2.5" fill="#e05050"/><path d="M2.5 6.5 Q2.5 11 7 11 Q11.5 11 11.5 6.5" stroke="#e05050" stroke-width="1.3" fill="none"/><path d="M7 11 L7 13.5 M4.5 13.8 L9.5 13.8" stroke="#e05050" stroke-width="1.4"/><path d="M1 14.5 L13 1" stroke="#e05050" stroke-width="1.4"/></svg><div class="t" style="left:22.5px;top:73.5px;font-size:12.5px;color:#fff">Г.Балхаш, &nbsp;ОШ 10 М...</div>
</div>
<div class="a" style="left:1148px;top:522px;width:160px;height:90px;overflow:hidden">
<svg width="160" height="90" style="position:absolute;left:0;top:0"><defs>
<linearGradient id="t5bg" x1="0" x2="1" y1="1" y2="0"><stop offset="0" stop-color="#d6d2da"/><stop offset=".6" stop-color="#dcdae2"/><stop offset="1" stop-color="#e0e6ee"/></linearGradient>
<pattern id="lat" width="9.8" height="9.8" patternUnits="userSpaceOnUse" patternTransform="rotate(45)"><path d="M0 0 L9.8 0 M0 0 L0 9.8" stroke="#928ca4" stroke-width="2.6"/></pattern></defs>
<rect width="160" height="90" fill="url(#t5bg)"/><rect width="160" height="90" fill="url(#lat)" opacity=".85"/></svg>
<div class="a" style="left:0;top:70px;width:160px;height:20px;background:rgba(38,38,38,.72)"></div><svg class="a" style="left:4px;top:73px" width="14" height="15" viewBox="0 0 14 15"><rect x="4.5" y="1" width="5" height="8" rx="2.5" fill="#e05050"/><path d="M2.5 6.5 Q2.5 11 7 11 Q11.5 11 11.5 6.5" stroke="#e05050" stroke-width="1.3" fill="none"/><path d="M7 11 L7 13.5 M4.5 13.8 L9.5 13.8" stroke="#e05050" stroke-width="1.4"/><path d="M1 14.5 L13 1" stroke="#e05050" stroke-width="1.4"/></svg><div class="t" style="left:22.5px;top:73.5px;font-size:12.5px;color:#fff">г.Балхаш, Айтжанов ...</div>
</div>
<div class="a" style="left:1191px;top:618px;width:74px;height:33px;border-radius:4px;background:#0f0f0f"></div>
<svg class="a" style="left:1220px;top:628px" width="16" height="12"><path d="M1.5 3.5 L8 10 L14.5 3.5" stroke="#8c8a9c" stroke-width="2" fill="none"/></svg>


<!-- window controls -->
<div class="a" style="left:1268px;top:2px;width:30px;height:17px;border-radius:3px;border:1px solid #8a9bb0;background:linear-gradient(#e4ebf4,#c6d3e2)"></div>
<div class="a" style="left:1277px;top:9px;width:11px;height:4px;border-radius:1px;background:#fff;border:1px solid #5a6878"></div>
<div class="a" style="left:1301px;top:2px;width:30px;height:17px;border-radius:3px;border:1px solid #8a9bb0;background:linear-gradient(#e4ebf4,#c6d3e2)"></div>
<div class="a" style="left:1313px;top:5px;width:9px;height:7px;border:1.5px solid #4a5868;background:#fff"></div>
<div class="a" style="left:1309px;top:9px;width:9px;height:7px;border:1.5px solid #4a5868;background:#fff"></div>
<div class="a" style="left:1334px;top:2px;width:30px;height:17px;border-radius:3px;border:1px solid #8a9bb0;background:linear-gradient(#e4ebf4,#c6d3e2)"></div>
<svg class="a" style="left:1341px;top:3px" width="16" height="15"><path d="M3.5 3.5 L12.5 11.5 M12.5 3.5 L3.5 11.5" stroke="#4a5868" stroke-width="3.6"/><path d="M3.5 3.5 L12.5 11.5 M12.5 3.5 L3.5 11.5" stroke="#fff" stroke-width="1.6"/></svg>
<svg class="a" style="left:1082px;top:8px" width="11" height="8"><path d="M2 2 L5.5 5.5 L9 2" stroke="#e6e6e6" stroke-width="1.6" fill="none"/></svg>
<!-- shield -->
<svg class="a" style="left:13px;top:35px" width="14" height="15" viewBox="0 0 14 15"><path d="M7 0.5 L13 2.8 L13 7 Q13 12 7 14.5 Q1 12 1 7 L1 2.8 Z" fill="#22c55e"/><path d="M4 7.5 L6.2 9.6 L10 5.6" stroke="#1a1a1a" stroke-width="1.6" fill="none"/></svg>
<!-- camera icon in banner -->
<svg class="a" style="left:194px;top:45px" width="22" height="15" viewBox="0 0 22 15"><rect x="1" y="1" width="14" height="12" rx="2.5" stroke="#eee" stroke-width="1.4" fill="none"/><circle cx="5" cy="5" r="1.3" fill="#eee"/><path d="M16.5 5.5 L20.5 2.5 L20.5 11.5 L16.5 8.5 Z" stroke="#eee" stroke-width="1.3" fill="none"/></svg>
<!-- info -->
<svg class="a" style="left:878px;top:41px" width="22" height="22"><circle cx="11" cy="11" r="9.5" stroke="#8e9196" stroke-width="1.3" fill="none"/><circle cx="11" cy="6.5" r="1.1" fill="#8e9196"/><path d="M9.5 9.5 L11.5 9.5 L11.5 15.5 M9.3 15.5 L13.5 15.5" stroke="#8e9196" stroke-width="1.3" fill="none"/></svg>
<!-- slide annotation icons -->
<svg class="a" style="left:10px;top:650px" width="160" height="24">
 <g fill="none" stroke="#d6d6d6" stroke-width="1">
 <circle cx="12" cy="11.7" r="9.6"/><path d="M14 8 L9.5 11.7 L14 15.4 Z"/>
 <circle cx="64" cy="11.7" r="9.6"/><path d="M58 17 L68 7 L70 9 L60 19 L57 20 Z"/>
 <circle cx="90" cy="11.7" r="9.6"/><rect x="85" y="7" width="10" height="9"/>
 <circle cx="116.5" cy="11.7" r="9.6"/><circle cx="115" cy="10" r="4"/><path d="M118 13 L123 18"/>
 <circle cx="142.5" cy="11.7" r="9.6"/><circle cx="138.5" cy="11.7" r="1.3"/><circle cx="142.5" cy="11.7" r="1.3"/><circle cx="146.5" cy="11.7" r="1.3"/>
 </g>
 <circle cx="38" cy="11.7" r="9.6" fill="none" stroke="#8a8a8a" stroke-width="1"/><path d="M36 8 L41 11.7 L36 15.4 Z" fill="none" stroke="#9a9a9a"/>
 <path d="M40 11 L40 22 L42.5 19.5 L44.5 23.5 L46 22.8 L44 18.8 L47.5 18.8 Z" fill="#fff" stroke="#222" stroke-width=".9"/>
</svg>

<!-- bottom toolbar -->

<div class="a" style="left:0;top:675px;width:1366px;height:53px;background:#1a1a1a"></div>
<!-- mic -->
<svg class="a" style="left:36px;top:678px" width="30" height="28" viewBox="0 0 30 28">
 <rect x="10" y="2" width="10" height="15" rx="5" fill="#a6a6a6"/>
 <path d="M6.5 12 Q6.5 21 15 21 Q23.5 21 23.5 12" stroke="#a6a6a6" stroke-width="1.8" fill="none"/>
 <rect x="14" y="21" width="2" height="4" fill="#a6a6a6"/><rect x="10" y="24.5" width="10" height="1.8" fill="#a6a6a6"/>
 <path d="M3 27 L26 2" stroke="#e8404a" stroke-width="1.8"/>
</svg>
<svg class="a" style="left:84px;top:687px" width="10" height="8"><path d="M1.5 6 L5 2.5 L8.5 6" stroke="#bbb" stroke-width="1.5" fill="none"/></svg>
<div class="t lbl" style="left:10px;top:708px">Включить звук</div>
<!-- video -->
<svg class="a" style="left:147px;top:684px" width="26" height="16" viewBox="0 0 26 16"><rect x="1" y="1" width="16" height="14" rx="3.5" fill="#a6a6a6"/><path d="M18 6 L24 2.5 L24 13.5 L18 10 Z" fill="#a6a6a6"/></svg>
<svg class="a" style="left:202px;top:687px" width="10" height="8"><path d="M1.5 6 L5 2.5 L8.5 6" stroke="#bbb" stroke-width="1.5" fill="none"/></svg>
<div class="t lbl" style="left:109px;top:708px">Остановить видео</div>
<!-- participants -->
<svg class="a" style="left:283px;top:682px" width="26" height="20" viewBox="0 0 26 20"><circle cx="9" cy="5" r="4.2" fill="#a6a6a6"/><path d="M1 18 Q1 10.5 9 10.5 Q15 10.5 16 16 L16 18 Z" fill="#a6a6a6"/><circle cx="18.5" cy="7" r="3.5" fill="#a6a6a6"/><path d="M16.5 18.5 L16.5 16 Q16 12 19 12 Q25 12 25 17 L25 18.5 Z" fill="#a6a6a6"/></svg>
<div class="t" style="left:312px;top:682px;font-size:13px;color:#d4d4d4">70</div>
<svg class="a" style="left:344px;top:687px" width="10" height="8"><path d="M1.5 6 L5 2.5 L8.5 6" stroke="#bbb" stroke-width="1.5" fill="none"/></svg>
<div class="t lbl" style="left:267px;top:708px">Участники</div>
<!-- chat -->
<svg class="a" style="left:395px;top:682px" width="22" height="20" viewBox="0 0 22 20"><path d="M10.5 1 C16.5 1 20.5 4.5 20.5 8.5 C20.5 12.5 16.5 15.5 10.5 15.5 L6 19.5 L6 14.8 C2.8 13.5 0.5 11 0.5 8.5 C0.5 4.5 4.5 1 10.5 1 Z" fill="#a6a6a6"/></svg>
<div class="a" style="left:409px;top:677px;width:16px;height:15px;border-radius:7px;background:#e8343a"></div>
<div class="t" style="left:413px;top:677px;font-size:11px;font-weight:bold;color:#fff">6</div>
<svg class="a" style="left:434px;top:687px" width="10" height="8"><path d="M1.5 6 L5 2.5 L8.5 6" stroke="#bbb" stroke-width="1.5" fill="none"/></svg>
<div class="t lbl" style="left:396px;top:708px">Чат</div>
<!-- share -->
<div class="a" style="left:508px;top:683px;width:24px;height:18px;border-radius:3px;background:#22cf5b"></div>
<svg class="a" style="left:508px;top:683px" width="24" height="18"><path d="M12 13 L12 5.5 M8.5 8.5 L12 5 L15.5 8.5" stroke="#111" stroke-width="2" fill="none"/></svg>
<div class="t lbl" style="left:459px;top:708px;color:#28d35e">Демонстрация экрана</div>
<!-- summary -->
<svg class="a" style="left:620px;top:680px" width="21" height="24" viewBox="0 0 21 24"><path d="M3 0.5 L14 0.5 L20.5 7 L20.5 21 Q20.5 23.5 18 23.5 L3 23.5 Q0.5 23.5 0.5 21 L0.5 3 Q0.5 0.5 3 0.5 Z" fill="#a6a6a6"/><path d="M14 0.5 L14 5 Q14 7 16 7 L20.5 7" fill="#e0e0e0"/><path d="M9 11 Q9.5 15 13 15.5 Q9.5 16 9 20 Q8.5 16 5 15.5 Q8.5 15 9 11 Z" fill="#1a1a1a"/><path d="M13.5 9 Q13.7 10.5 15 10.7 Q13.7 11 13.5 12.5 Q13.3 11 12 10.7 Q13.3 10.5 13.5 9Z" fill="#1a1a1a"/></svg>
<div class="t lbl" style="left:610px;top:708px">Сводка</div>
<!-- AI -->
<svg class="a" style="left:703px;top:680px" width="26" height="25" viewBox="0 0 26 25"><path d="M11 5 Q12 14 20 14.5 Q12 15.5 11 24.5 Q10 15.5 1.5 14.5 Q10 14 11 5 Z" fill="#a6a6a6"/><path d="M20.5 1 Q21 4.5 24.5 5 Q21 5.5 20.5 9 Q20 5.5 16.5 5 Q20 4.5 20.5 1 Z" fill="#a6a6a6"/></svg>
<div class="t lbl" style="left:678px;top:708px">AI Companion</div>
<!-- reactions -->
<svg class="a" style="left:791px;top:679px" width="24" height="24" viewBox="0 0 24 24"><circle cx="10.5" cy="14.5" r="9" fill="#a6a6a6"/><circle cx="7.5" cy="12.5" r="1.2" fill="#1a1a1a"/><circle cx="13.5" cy="12.5" r="1.2" fill="#1a1a1a"/><path d="M6.5 16 Q10.5 20 14.5 16" stroke="#1a1a1a" stroke-width="1.4" fill="none"/><circle cx="18.5" cy="5.5" r="5" fill="#1a1a1a"/><path d="M18.5 1.5 L18.5 9.5 M14.5 5.5 L22.5 5.5" stroke="#a6a6a6" stroke-width="1.5"/></svg>
<div class="t lbl" style="left:780px;top:708px">Реакции</div>
<!-- apps -->
<svg class="a" style="left:877px;top:684px" width="18" height="18" viewBox="0 0 18 18"><path d="M6 1.5 L3.5 1.5 Q1.5 1.5 1.5 3.5 L1.5 9" stroke="#a6a6a6" stroke-width="1.7" fill="none"/><path d="M16.5 9 L16.5 14.5 Q16.5 16.5 14.5 16.5 L9 16.5" stroke="#a6a6a6" stroke-width="1.7" fill="none"/><circle cx="13.5" cy="4" r="2.6" stroke="#a6a6a6" stroke-width="1.6" fill="none"/><circle cx="4" cy="13.5" r="2.6" stroke="#a6a6a6" stroke-width="1.6" fill="none"/></svg>
<div class="t lbl" style="left:851px;top:708px">Приложения</div>
<!-- boards -->
<svg class="a" style="left:979px;top:682px" width="22" height="18" viewBox="0 0 22 18"><path d="M7 16 L3 16 Q1 16 1 14 L1 3 Q1 1 3 1 L18 1 Q20 1 20 3 L20 12" stroke="#a6a6a6" stroke-width="1.6" fill="none"/><rect x="8" y="12.5" width="13" height="4.5" rx="2.2" fill="#a6a6a6"/></svg>
<div class="t lbl" style="left:939px;top:708px">Доски сообщений</div>
<!-- notes -->
<svg class="a" style="left:1089px;top:682px" width="20" height="21" viewBox="0 0 20 21"><path d="M6 18 L4.5 18 Q2.5 18 2.5 16 L2.5 3 Q2.5 1 4.5 1 L13.5 1 Q15.5 1 15.5 3 L15.5 15" stroke="#a6a6a6" stroke-width="1.5" fill="none"/><path d="M1 4 L3 4 M1 7 L3 7 M1 10 L3 10 M1 13 L3 13" stroke="#a6a6a6" stroke-width="1.2"/><path d="M6 5 L12 5 M6 8 L12 8 M6 11 L9 11" stroke="#a6a6a6" stroke-width="1.3"/><rect x="7" y="16" width="12" height="4" rx="2" fill="#a6a6a6"/></svg>
<div class="t lbl" style="left:1063px;top:708px">Примечания</div>
<!-- more -->
<div class="a" style="left:1188px;top:689px;width:5px;height:5px;border-radius:50%;background:#a6a6a6"></div>
<div class="a" style="left:1196px;top:689px;width:5px;height:5px;border-radius:50%;background:#a6a6a6"></div>
<div class="a" style="left:1204px;top:689px;width:5px;height:5px;border-radius:50%;background:#a6a6a6"></div>
<div class="t lbl" style="left:1155px;top:708px">Дополнительно</div>
<div class="a" style="left:1292px;top:688px;width:62px;height:27px;border-radius:6px;background:#b82427"></div>
<div class="t" style="left:1303px;top:693px;font-size:13px;font-weight:bold;color:#fff">Выйти</div>

<!-- taskbar -->
<div class="a" style="left:0;top:728px;width:1366px;height:40px;background:linear-gradient(90deg,#8c9fb5 0,#95aac2 40px,#a5bedb 80px,#a9c2de 600px,#a8c1dd 975px,#8d9fb4 1005px,#8fa2b8 1366px)"></div>
<div class="a" style="left:0;top:728px;width:1366px;height:1px;background:#5d7088"></div>
<div class="a" style="left:0;top:729px;width:1366px;height:1px;background:rgba(255,255,255,.35)"></div>
<!-- start orb -->
<div class="a" style="left:9px;top:730px;width:36px;height:36px;border-radius:50%;background:radial-gradient(circle at 50% 30%,#8fc4ea 0,#3a88c8 40%,#0e4c8e 75%,#1b6fb5 100%);box-shadow:0 0 0 1px #2a5d90"></div>
<svg class="a" style="left:15px;top:736px" width="24" height="24" viewBox="0 0 24 24"><path d="M3 5 Q7 3 11 5 L10 11 Q6 9.5 2 11 Z" fill="#f05a28"/><path d="M12.5 5.5 Q16.5 7.5 21 5 L20 11.5 Q16 13.5 11.5 11.5 Z" fill="#7cbb42"/><path d="M2 12.5 Q6 11 10 12.5 L9 18.5 Q5 17 1 18.5 Z" fill="#1a9ad6"/><path d="M11.5 13 Q15.5 15 20 12.5 L19 19 Q15 21 10.5 19 Z" fill="#fbbc09"/></svg>
<!-- WMP -->
<div class="a" style="left:76px;top:737px;width:22px;height:24px;background:linear-gradient(#cfe3f6,#8fb8e2);border:1px solid #7ea5cf"></div>
<div class="a" style="left:79px;top:739px;width:22px;height:23px;background:linear-gradient(#dbeaf8,#9fc3e8);border:1px solid #7ea5cf"></div>
<div class="a" style="left:77px;top:741px;width:16px;height:16px;border-radius:50%;background:radial-gradient(circle at 40% 35%,#ffb061,#f06a10)"></div>
<svg class="a" style="left:77px;top:741px" width="16" height="16"><path d="M6 4 L12 8 L6 12 Z" fill="#fff"/></svg>
<!-- VK -->
<div class="a" style="left:135px;top:732px;width:32px;height:32px;border-radius:5px;background:#4a76a8"></div>
<div class="t" style="left:139px;top:739px;font-size:16px;font-weight:bold;color:#fff;letter-spacing:-1px">VK</div>
<!-- explorer active -->
<div class="a" style="left:184px;top:729px;width:58px;height:39px;border-radius:3px;border:1px solid #8ea3bb;background:linear-gradient(#e6eef7,#c7d7e9)"></div>
<div class="a" style="left:197px;top:737px;width:32px;height:24px;border-radius:2px;background:linear-gradient(#f9e9a8,#e6c460);border:1px solid #c6a040"></div>
<div class="a" style="left:200px;top:741px;width:26px;height:3px;background:#fff"></div>
<div class="a" style="left:201px;top:736px;width:3px;height:3px;background:#1ea51e"></div>
<div class="a" style="left:209px;top:738px;width:3px;height:3px;background:#d62222"></div>
<div class="a" style="left:217px;top:740px;width:3px;height:3px;background:#1e88e5"></div>
<div class="a" style="left:204px;top:751px;width:20px;height:13px;border:3px solid #6ac2ee;border-bottom:none;border-radius:2px 2px 0 0"></div>
<!-- winrar -->
<div class="a" style="left:260px;top:738px;width:30px;height:7px;background:#9a3d9a;transform:skewX(-18deg)"></div>
<div class="a" style="left:260px;top:746px;width:30px;height:7px;background:#2f3fc0;transform:skewX(-18deg)"></div>
<div class="a" style="left:260px;top:754px;width:30px;height:7px;background:#2ea82e;transform:skewX(-18deg)"></div>
<div class="a" style="left:276px;top:738px;width:3px;height:23px;background:#b8842a"></div>
<!-- word -->
<div class="a" style="left:334px;top:736px;width:18px;height:24px;background:#fff;border:1px solid #2b579a"></div>
<div class="a" style="left:337px;top:740px;width:12px;height:16px;background:repeating-linear-gradient(#2b579a 0,#2b579a 1px,transparent 1px,transparent 3px)"></div>
<div class="a" style="left:322px;top:733px;width:16px;height:30px;background:#2b579a;clip-path:polygon(0 12%,100% 0,100% 100%,0 88%)"></div>
<div class="t" style="left:323px;top:740px;font-size:13px;font-weight:bold;color:#fff">W</div>
<!-- zoom active -->
<div class="a" style="left:370px;top:729px;width:58px;height:39px;border-radius:3px;border:1px solid #8ea3bb;background:linear-gradient(#e6eef7,#c7d7e9)"></div>
<div class="a" style="left:383px;top:732px;width:32px;height:32px;border-radius:50%;background:radial-gradient(circle at 45% 35%,#3a7dff,#0b5cff 55%,#0844c0)"></div>
<div class="t" style="left:387px;top:738px;font-size:16px;font-weight:bold;color:#fff;letter-spacing:-1px">zm</div>
<!-- chrome active -->
<div class="a" style="left:432px;top:729px;width:58px;height:39px;border-radius:3px;border:1px solid #8ea3bb;background:linear-gradient(#e6eef7,#c7d7e9)"></div>
<div class="a" style="left:445px;top:732px;width:32px;height:32px;border-radius:50%;background:conic-gradient(from -60deg,#db4437 0 120deg,#f4c20d 120deg 240deg,#0f9d58 240deg 360deg)"></div>
<div class="a" style="left:453px;top:740px;width:16px;height:16px;border-radius:50%;background:#4285f4;border:3px solid #fff"></div>
<div class="a" style="left:468px;top:752px;width:7px;height:11px;border-radius:2px;background:#f2f2f2;border:1px solid #bbb"></div>
<!-- yandex browser -->
<div class="a" style="left:507px;top:732px;width:32px;height:32px;border-radius:50%;background:#fff"></div>
<svg class="a" style="left:507px;top:732px" width="32" height="32"><path d="M9 8 L16 17" stroke="#ff5a1f" stroke-width="4" stroke-linecap="round"/><path d="M23 8 L16 17" stroke="#e85ae0" stroke-width="4" stroke-linecap="round"/><path d="M16 17 L16 26" stroke="#ff3a1f" stroke-width="4" stroke-linecap="round"/></svg>
<!-- acrobat -->
<div class="a" style="left:571px;top:733px;width:28px;height:26px;background:linear-gradient(#e0101a,#8a0008);box-shadow:1px 1px 1px rgba(0,0,0,.3)"></div>
<svg class="a" style="left:571px;top:733px" width="28" height="26"><path d="M13 4 Q11 8 14 13 Q17 18 24 19 Q18 17 10 20 Q6 22 7 19 Q10 15 13 7 Q14 4 13 4 Z" stroke="#fff" stroke-width="1.3" fill="none"/></svg>
<!-- yandex -->
<div class="a" style="left:631px;top:732px;width:32px;height:32px;border-radius:50%;background:#fc3f1d"></div>
<div class="t" style="left:638px;top:735px;font-size:22px;font-weight:bold;color:#fff">Я</div>
<!-- ppt active -->
<div class="a" style="left:680px;top:729px;width:58px;height:39px;border-radius:3px;border:1px solid #8ea3bb;background:linear-gradient(#e6eef7,#c7d7e9)"></div>
<div class="a" style="left:706px;top:737px;width:18px;height:23px;background:#fff;border:1px solid #d24726"></div>
<div class="a" style="left:710px;top:740px;width:8px;height:8px;border-radius:50%;background:conic-gradient(#d24726 0 270deg,#fff 270deg)"></div>
<div class="a" style="left:709px;top:750px;width:12px;height:7px;background:repeating-linear-gradient(#d24726 0,#d24726 1px,transparent 1px,transparent 3px)"></div>
<div class="a" style="left:694px;top:733px;width:16px;height:30px;background:#d24726;clip-path:polygon(0 12%,100% 0,100% 100%,0 88%)"></div>
<div class="t" style="left:696px;top:740px;font-size:14px;font-weight:bold;color:#fff">P</div>
<!-- tray -->
<div class="t" style="left:1018px;top:739px;font-size:12px;color:#fff">RU</div>
<div class="a" style="left:1040px;top:739px;width:15px;height:15px;border-radius:50%;background:radial-gradient(circle at 40% 35%,#5a7bff,#0a1e9e);border:1px solid #3a4a9a"></div>
<div class="t" style="left:1044px;top:739px;font-size:11px;font-weight:bold;color:#fff">?</div>
<div class="a" style="left:1066px;top:737px;width:7px;height:5px;border:1px solid #fff"></div>
<div class="a" style="left:1068px;top:735px;width:7px;height:5px;border:1px solid #fff"></div>
<svg class="a" style="left:1065px;top:747px" width="10" height="6"><path d="M1 1 L9 1 L5 5 Z" fill="#fff"/></svg>
<div class="a" style="left:1085px;top:740px;width:15px;height:12px;background:linear-gradient(#3a7ad0,#0a2a6a);border:1px solid #222"></div>
<div class="a" style="left:1090px;top:752px;width:5px;height:3px;background:#222"></div>
<svg class="a" style="left:1108px;top:739px" width="16" height="16"><path d="M2 5.5 L5 5.5 L10 2 L10 14 L5 10.5 L2 10.5 Z" fill="#e8542a" stroke="#8a2a10" stroke-width=".8"/><path d="M12 5 Q14 8 12 11" stroke="#5a3a2a" stroke-width="1" fill="none"/></svg>
<div class="a" style="left:1131px;top:739px;width:17px;height:17px;border-radius:50%;background:#1a6ef0"></div>
<div class="t" style="left:1133px;top:742px;font-size:8px;font-weight:bold;color:#fff">zm</div>
<div class="a" style="left:1157px;top:743px;width:15px;height:9px;background:linear-gradient(#eee,#aaa);border-radius:2px"></div>
<svg class="a" style="left:1160px;top:741px" width="14" height="14"><path d="M2 7 L6 11 L12 3" stroke="#22b022" stroke-width="2.5" fill="none"/></svg>
<svg class="a" style="left:1182px;top:740px" width="14" height="14"><path d="M1 5 L4 5 L8 2 L8 12 L4 9 L1 9 Z" fill="#eee" stroke="#555" stroke-width=".8"/><path d="M10 4.5 Q12 7 10 9.5" stroke="#444" stroke-width="1" fill="none"/></svg>
<div class="a" style="left:1207px;top:745px;width:13px;height:10px;background:#fff;border:1px solid #333"></div>
<div class="a" style="left:1203px;top:739px;width:4px;height:9px;background:#eee;border:1px solid #333"></div>
<div class="a" style="left:1229px;top:745px;width:15px;height:11px;background:linear-gradient(#f2d680,#c8a030);border:1px solid #555"></div>
<div class="a" style="left:1236px;top:737px;width:8px;height:10px;background:#fff;border:1px solid #345"></div>
<div class="a" style="left:1238px;top:739px;width:3px;height:6px;background:#1a4ab0"></div>
<div class="a" style="left:1256px;top:740px;width:8px;height:8px;border-radius:50%;border:2px solid #1aa0e0"></div>
<div class="a" style="left:1259px;top:748px;width:2px;height:7px;background:#1aa0e0"></div>
<div class="t" style="left:1299px;top:734px;font-size:12.6px;color:#fff;transform:scaleX(.93);transform-origin:0 0">11:21</div>
<div class="t" style="left:1286px;top:751px;font-size:12.6px;color:#fff;transform:scaleX(.9);transform-origin:0 0">01.11.2024</div>
<div class="a" style="left:1352px;top:729px;width:14px;height:39px;border-left:1px solid #6a7a8c;background:linear-gradient(90deg,#9fb2c6,#8497ad)"></div>
</body></html>
